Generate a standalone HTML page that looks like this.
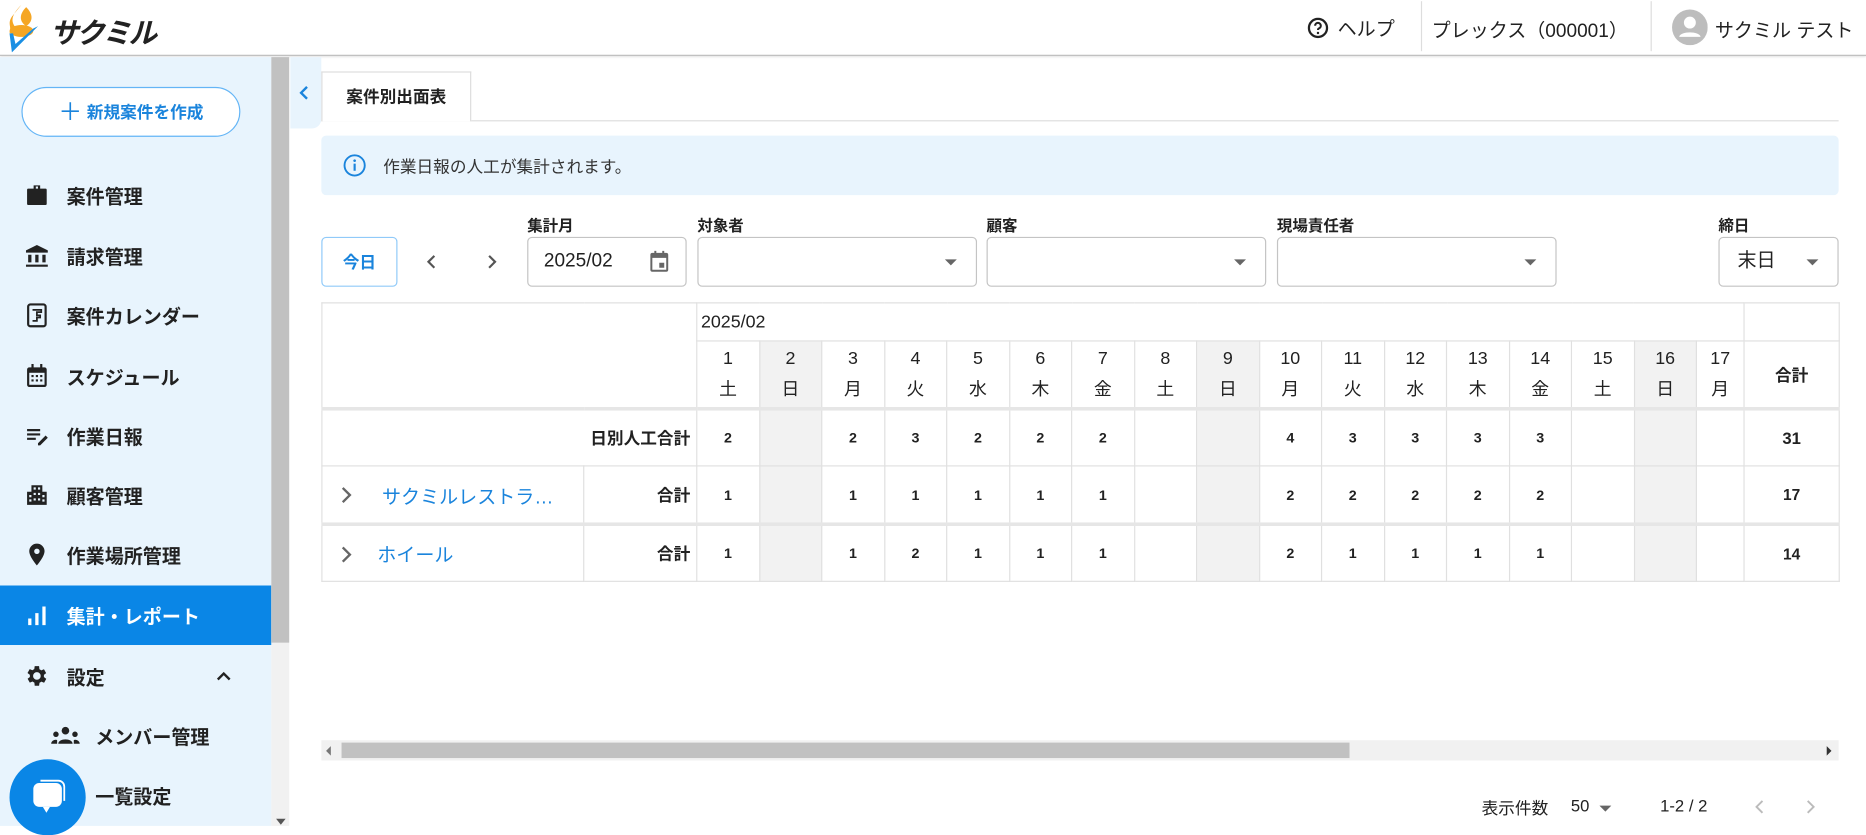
<!DOCTYPE html>
<html><head><meta charset="utf-8"><style>
*{box-sizing:border-box;margin:0;padding:0}
html,body{width:1866px;height:826px;overflow:hidden;background:#fff}
#w{position:absolute;left:0;top:0;width:1568px;height:694px;transform:scale(1.19005);transform-origin:0 0;font-family:"Liberation Sans","Noto Sans CJK JP",sans-serif;color:#212121}
.a{position:absolute}
.hdr{left:0;top:0;width:1568px;height:47px;border-bottom:1px solid #bdbdbd;box-shadow:0 1px 2px rgba(0,0,0,.15);background:#fff}
.side{left:0;top:48px;width:228px;height:646px;background:#e8f4fd}
.mi{position:absolute;left:0;width:228px;height:50px;font-size:16px;font-weight:bold;display:flex;align-items:center}
.mi svg{position:absolute;left:20px}
.mi span{position:absolute;left:56px}
.act{background:#0a86e6;color:#fff}
.lbl{font-size:13px;font-weight:bold;top:179px}
.inp{top:199px;height:42px;border:1px solid #c4c4c4;border-radius:4px;background:#fff}
.dd{position:absolute;right:16px;top:18px;width:0;height:0;border-left:5px solid transparent;border-right:5px solid transparent;border-top:5px solid #666}
table{border-collapse:collapse;position:absolute;left:270px;top:254px;table-layout:fixed}
td{border:1px solid #e0e0e0;text-align:center;font-size:12px;font-weight:bold;padding:0}
.su{background:#f2f2f2}
.dh td{font-size:15px;font-weight:normal;line-height:26px}
.chev{position:absolute;left:14px;top:16px}
</style></head><body><div id="w">
<div class="a hdr">
 <svg class="a" style="left:4px;top:2px" width="36" height="42" viewBox="0 0 36 42"><path d="M14 2 C6 10 4 16 10 22 L4 26 C6 20 2 18 6 12 Z" fill="#f5a623"/><path d="M18 4 C12 10 12 16 18 20 C24 16 24 10 18 4Z" fill="#f5a623"/><ellipse cx="14" cy="24" rx="10" ry="5" fill="#f5a623"/><path d="M4 26 L6 42 L28 20 L24 22 L9 35 L7 26Z" fill="#1a8fe3"/></svg>
 <div class="a" style="left:42px;top:8px;font-size:24px;font-weight:bold;font-style:italic;letter-spacing:-2px;color:#222">サクミル</div>
 <svg class="a" style="left:1098px;top:14px" width="19" height="19" viewBox="0 0 20 20"><circle cx="10" cy="10" r="8" fill="none" stroke="#222" stroke-width="2"/><path d="M7.5 8a2.5 2.5 0 1 1 3.5 2.3c-.7.3-1 .8-1 1.5" fill="none" stroke="#222" stroke-width="1.8"/><circle cx="10" cy="14.5" r="1.1" fill="#222"/></svg>
 <div class="a" style="left:1124px;top:11px;font-size:16px">ヘルプ</div>
 <div class="a" style="left:1194px;top:1px;width:1px;height:42px;background:#ddd"></div>
 <div class="a" style="left:1203px;top:12px;font-size:16px">プレックス（000001）</div>
 <div class="a" style="left:1387px;top:1px;width:1px;height:42px;background:#ddd"></div>
 <svg class="a" style="left:1405px;top:8px" width="30" height="30" viewBox="0 0 30 30"><circle cx="15" cy="15" r="15" fill="#bdbdbd"/><circle cx="15" cy="11" r="5" fill="#fff"/><path d="M6 23c1-5 17-5 18 0z" fill="#fff"/></svg>
 <div class="a" style="left:1441px;top:12px;font-size:16px">サクミル テスト</div>
</div>
<div class="a side">
 <div class="a" style="left:18px;top:25px;width:184px;height:42px;border:1px solid #64b5f6;border-radius:21px;background:#fff;color:#1a84dc;font-size:14px;font-weight:bold;text-align:center;line-height:40px"><span style="font-size:20px;font-weight:normal;vertical-align:-2px">＋</span> 新規案件を作成</div>
</div>
<div class="a" style="left:0;top:48px;width:228px;height:646px">
 <div class="mi" style="top:91px"><svg width="22" height="22" viewBox="0 0 24 24"><path d="M9 3h6v3h5a1 1 0 0 1 1 1v13a1 1 0 0 1-1 1H4a1 1 0 0 1-1-1V7a1 1 0 0 1 1-1h5zm2 1v2h2V4z" fill="#222"/></svg><span>案件管理</span></div>
 <div class="mi" style="top:142px"><svg width="22" height="22" viewBox="0 0 24 24"><path d="M12 2 2 7v2h20V7zM4 11h3v7H4zm6.5 0h3v7h-3zM17 11h3v7h-3zM2 20h20v2H2z" fill="#222"/></svg><span>請求管理</span></div>
 <div class="mi" style="top:192px"><svg width="22" height="22" viewBox="0 0 24 24"><rect x="4" y="2" width="16" height="20" rx="2" fill="none" stroke="#222" stroke-width="2"/><path d="M8 7h8v2h-4v3h3v2h-3v3H8" fill="none" stroke="#222" stroke-width="1.6"/></svg><span>案件カレンダー</span></div>
 <div class="mi" style="top:243px"><svg width="22" height="22" viewBox="0 0 24 24"><path d="M7 1h2v3h6V1h2v3h2a2 2 0 0 1 2 2v14a2 2 0 0 1-2 2H5a2 2 0 0 1-2-2V6a2 2 0 0 1 2-2h2z" fill="#222"/><rect x="5" y="9" width="14" height="11" fill="#e8f4fd"/><path d="M7 11h2v2H7zm4 0h2v2h-2zm4 0h2v2h-2zM7 15h2v2H7zm4 0h2v2h-2zm4 0h2v2h-2z" fill="#222"/></svg><span>スケジュール</span></div>
 <div class="mi" style="top:293px"><svg width="22" height="22" viewBox="0 0 24 24"><path d="M3 6h12v2H3zm0 4h12v2H3zm0 4h8v2H3zm10 5 7-7 2 2-7 7h-2z" fill="#222"/></svg><span>作業日報</span></div>
 <div class="mi" style="top:343px"><svg width="22" height="22" viewBox="0 0 24 24"><path d="M7 3h10v6h4v12H3V9h4z" fill="#222"/><path d="M9 5h2v2H9zm4 0h2v2h-2zM9 10h2v2H9zm4 0h2v2h-2zM5 12h2v2H5zm12 0h2v2h-2zM9 15h2v2H9zm4 0h2v2h-2zM5 16h2v2H5zm12 0h2v2h-2z" fill="#e8f4fd"/></svg><span>顧客管理</span></div>
 <div class="mi" style="top:393px"><svg width="22" height="22" viewBox="0 0 24 24"><path d="M12 2a7 7 0 0 0-7 7c0 5 7 13 7 13s7-8 7-13a7 7 0 0 0-7-7zm0 9.5a2.5 2.5 0 1 1 0-5 2.5 2.5 0 0 1 0 5z" fill="#222"/></svg><span>作業場所管理</span></div>
 <div class="mi act" style="top:444px"><svg width="22" height="22" viewBox="0 0 24 24"><path d="M4 15h3v6H4zm6.5-5h3v11h-3zM17 4h3v17h-3z" fill="#fff"/></svg><span>集計・レポート</span></div>
 <div class="mi" style="top:495px"><svg width="22" height="22" viewBox="0 0 24 24"><path d="M19.4 13a7.5 7.5 0 0 0 0-2l2.1-1.6-2-3.5-2.5 1a7 7 0 0 0-1.7-1L15 3h-4l-.4 2.8a7 7 0 0 0-1.7 1l-2.5-1-2 3.5L6.6 11a7.5 7.5 0 0 0 0 2l-2.1 1.6 2 3.5 2.5-1a7 7 0 0 0 1.7 1L11 21h4l.4-2.8a7 7 0 0 0 1.7-1l2.5 1 2-3.5zM13 15.5a3.5 3.5 0 1 1 0-7 3.5 3.5 0 0 1 0 7z" fill="#222" transform="translate(-1 0)"/></svg><span>設定</span><svg style="left:180px" width="16" height="16" viewBox="0 0 16 16"><path d="M3 11l5-5 5 5" fill="none" stroke="#222" stroke-width="2"/></svg></div>
 <div class="mi" style="top:545px"><svg style="left:42px" width="26" height="18" viewBox="0 0 26 18"><circle cx="13" cy="5" r="3.2" fill="#222"/><circle cx="5" cy="8" r="2.3" fill="#222"/><circle cx="21" cy="8" r="2.3" fill="#222"/><path d="M7 16c0-5 12-5 12 0zM1 16c0-3 4-4 5-3v3zm24 0c0-3-4-4-5-3v3z" fill="#222"/></svg><span style="left:80px">メンバー管理</span></div>
 <div class="mi" style="top:595px"><span style="left:80px">一覧設定</span></div>
</div>
<div class="a" style="left:8px;top:638px;width:64px;height:64px;border-radius:50%;background:#0a86e6"></div>
<svg class="a" style="left:24px;top:654px" width="34" height="34" viewBox="0 0 34 34"><rect x="4" y="4" width="24" height="20" rx="5" fill="#fff"/><path d="M12 24h6l-3 5z" fill="#fff"/><path d="M10 2h15a5 5 0 0 1 5 5v12" fill="none" stroke="#fff" stroke-width="1.5"/></svg>
<div class="a" style="left:228px;top:48px;width:15px;height:646px;background:#f1f1f1"></div>
<div class="a" style="left:228px;top:48px;width:15px;height:492px;background:#c1c1c1"></div>
<div class="a" style="left:232px;top:688px;border-left:4px solid transparent;border-right:4px solid transparent;border-top:5px solid #555"></div>
<div class="a" style="left:244px;top:48px;width:26px;height:60px;background:#e8f4fd;border-radius:0 0 8px 0"></div>
<svg class="a" style="left:250px;top:70px" width="12" height="16" viewBox="0 0 12 16"><path d="M8 3 3 8l5 5" fill="none" stroke="#1a84dc" stroke-width="2"/></svg>
<div class="a" style="left:270px;top:101px;width:1275px;height:1px;background:#ddd"></div>
<div class="a" style="left:270px;top:60px;width:126px;height:42px;border:1px solid #ddd;border-bottom:none;background:#fff;font-size:14px;font-weight:bold;text-align:center;line-height:40px">案件別出面表</div>
<div class="a" style="left:270px;top:114px;width:1275px;height:50px;background:#e8f4fd;border-radius:4px"></div>
<svg class="a" style="left:288px;top:129px" width="20" height="20" viewBox="0 0 20 20"><circle cx="10" cy="10" r="8.5" fill="none" stroke="#1a84dc" stroke-width="1.6"/><rect x="9.1" y="8.5" width="1.8" height="6" fill="#1a84dc"/><circle cx="10" cy="6" r="1.1" fill="#1a84dc"/></svg>
<div class="a" style="left:322px;top:130px;font-size:14px;color:#333">作業日報の人工が集計されます。</div>
<div class="a lbl" style="left:443px">集計月</div>
<div class="a lbl" style="left:586px">対象者</div>
<div class="a lbl" style="left:829px">顧客</div>
<div class="a lbl" style="left:1073px">現場責任者</div>
<div class="a lbl" style="left:1444px">締日</div>
<div class="a inp" style="left:270px;width:64px;border-color:#90caf9;color:#1a84dc;font-size:14px;font-weight:bold;text-align:center;line-height:40px">今日</div>
<svg class="a" style="left:356px;top:212px" width="14" height="16" viewBox="0 0 14 16"><path d="M9 3 4 8l5 5" fill="none" stroke="#555" stroke-width="1.8"/></svg>
<svg class="a" style="left:406px;top:212px" width="14" height="16" viewBox="0 0 14 16"><path d="M5 3l5 5-5 5" fill="none" stroke="#555" stroke-width="1.8"/></svg>
<div class="a inp" style="left:443px;width:134px;font-size:16px;line-height:40px;padding-left:13px">2025/02
 <svg class="a" style="left:100px;top:10px" width="20" height="20" viewBox="0 0 24 24"><path d="M7 1h2v2h6V1h2v2h2a2 2 0 0 1 2 2v15a2 2 0 0 1-2 2H5a2 2 0 0 1-2-2V5a2 2 0 0 1 2-2h2zM5 8v12h14V8zm7 5h5v5h-5z" fill="#666"/></svg></div>
<div class="a inp" style="left:586px;width:235px"><i class="dd"></i></div>
<div class="a inp" style="left:829px;width:235px"><i class="dd"></i></div>
<div class="a inp" style="left:1073px;width:235px"><i class="dd"></i></div>
<div class="a inp" style="left:1444px;width:101px;font-size:16px;line-height:40px;padding-left:15px">末日<i class="dd"></i></div>
<table>
<colgroup><col style="width:220px"><col style="width:95px"><col span="16" style="width:52.5px"><col style="width:40px"><col style="width:80px"></colgroup>
<tr style="height:32px"><td colspan="2" rowspan="2" style="border-bottom:3px solid #e6e6e6"></td><td colspan="17" style="text-align:left;font-size:15px;font-weight:normal;padding-left:3px">2025/02</td><td></td></tr>
<tr class="dh" style="height:57px;border-bottom:3px solid #e6e6e6">
<td>1<br>土</td><td class="su">2<br>日</td><td>3<br>月</td><td>4<br>火</td><td>5<br>水</td><td>6<br>木</td><td>7<br>金</td><td>8<br>土</td><td class="su">9<br>日</td><td>10<br>月</td><td>11<br>火</td><td>12<br>水</td><td>13<br>木</td><td>14<br>金</td><td>15<br>土</td><td class="su">16<br>日</td><td>17<br>月</td><td style="font-weight:bold;font-size:14px">合計</td></tr>
<tr style="height:48px;font-size:13px"><td colspan="2" style="text-align:right;padding-right:5px;font-size:14px">日別人工合計</td><td>2</td><td class="su"></td><td>2</td><td>3</td><td>2</td><td>2</td><td>2</td><td></td><td class="su"></td><td>4</td><td>3</td><td>3</td><td>3</td><td>3</td><td></td><td class="su"></td><td></td><td style="font-size:14px">31</td></tr>
<tr style="height:49px;border-bottom:3px solid #e6e6e6"><td style="text-align:left;font-weight:normal;font-size:16px;color:#1a84dc;position:relative"><svg class="chev" width="12" height="16" viewBox="0 0 12 16"><path d="M3 2l6 6-6 6" fill="none" stroke="#666" stroke-width="2"/></svg><span style="padding-left:50px">サクミルレストラ…</span></td><td style="text-align:right;padding-right:5px;font-size:14px">合計</td><td>1</td><td class="su"></td><td>1</td><td>1</td><td>1</td><td>1</td><td>1</td><td></td><td class="su"></td><td>2</td><td>2</td><td>2</td><td>2</td><td>2</td><td></td><td class="su"></td><td></td><td style="font-size:13px">17</td></tr>
<tr style="height:48px"><td style="text-align:left;font-weight:normal;font-size:16px;color:#1a84dc;position:relative"><svg class="chev" width="12" height="16" viewBox="0 0 12 16"><path d="M3 2l6 6-6 6" fill="none" stroke="#666" stroke-width="2"/></svg><span style="padding-left:46px">ホイール</span></td><td style="text-align:right;padding-right:5px;font-size:14px">合計</td><td>1</td><td class="su"></td><td>1</td><td>2</td><td>1</td><td>1</td><td>1</td><td></td><td class="su"></td><td>2</td><td>1</td><td>1</td><td>1</td><td>1</td><td></td><td class="su"></td><td></td><td style="font-size:13px">14</td></tr>
</table>
<div class="a" style="left:270px;top:622px;width:1275px;height:17px;background:#f1f1f1"></div>
<div class="a" style="left:287px;top:624px;width:847px;height:13px;background:#c1c1c1"></div>
<div class="a" style="left:274px;top:627px;border-top:4px solid transparent;border-bottom:4px solid transparent;border-right:4px solid #777"></div>
<div class="a" style="left:1535px;top:627px;border-top:4px solid transparent;border-bottom:4px solid transparent;border-left:4px solid #333"></div>
<div class="a" style="left:1245px;top:669px;font-size:14px">表示件数</div>
<div class="a" style="left:1320px;top:669px;font-size:14px">50</div>
<div class="a" style="left:1344px;top:677px;border-left:5px solid transparent;border-right:5px solid transparent;border-top:5px solid #666"></div>
<div class="a" style="left:1395px;top:669px;font-size:14px">1-2 / 2</div>
<svg class="a" style="left:1472px;top:670px" width="14" height="16" viewBox="0 0 14 16"><path d="M9 3 4 8l5 5" fill="none" stroke="#bbb" stroke-width="1.6"/></svg>
<svg class="a" style="left:1514px;top:670px" width="14" height="16" viewBox="0 0 14 16"><path d="M5 3l5 5-5 5" fill="none" stroke="#bbb" stroke-width="1.6"/></svg>
</div></body></html>
